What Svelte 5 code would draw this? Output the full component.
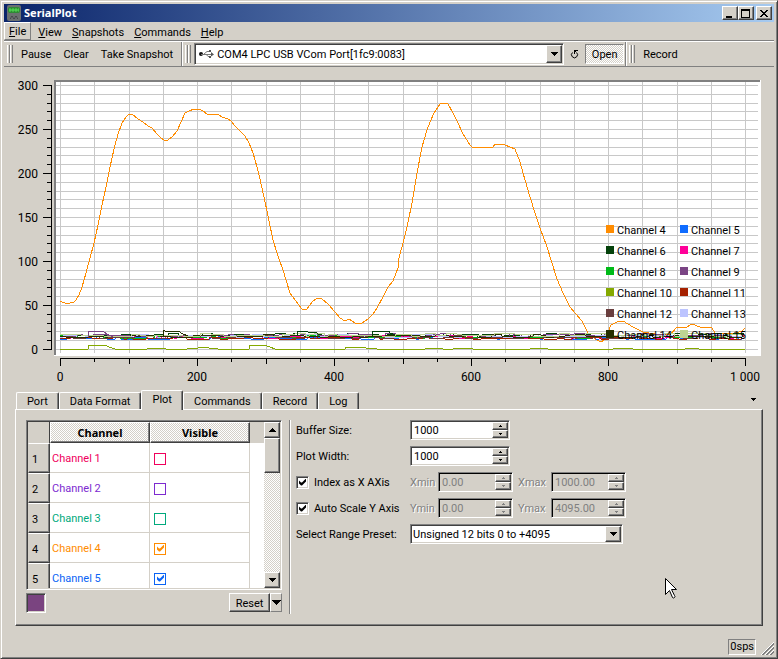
<script>
	const menus = ['File', 'View', 'Snapshots', 'Commands', 'Help'];
	const tabs = ['Port', 'Data Format', 'Plot', 'Commands', 'Record', 'Log'];

	let activeTab = $state('Plot');
	let port = $state('COM4 LPC USB VCom Port[1fc9:0083]');
	let preset = $state('Unsigned 12 bits 0 to +4095');

	let channels = $state([
		{ name: 'Channel 1', color: '#f0005c', visible: false },
		{ name: 'Channel 2', color: '#7d2ad0', visible: false },
		{ name: 'Channel 3', color: '#00a97c', visible: false },
		{ name: 'Channel 4', color: '#ff8c00', visible: true },
		{ name: 'Channel 5', color: '#0a64f5', visible: true }
	]);

	const legend = [
		{ name: 'Channel 4', color: '#ff8c00' },
		{ name: 'Channel 5', color: '#0f6cff' },
		{ name: 'Channel 6', color: '#04420b' },
		{ name: 'Channel 7', color: '#ff0099' },
		{ name: 'Channel 8', color: '#00ba18' },
		{ name: 'Channel 9', color: '#7a4484' },
		{ name: 'Channel 10', color: '#85a900' },
		{ name: 'Channel 11', color: '#a52100' },
		{ name: 'Channel 12', color: '#6a3e3e' },
		{ name: 'Channel 13', color: '#bcc4ff' },
		{ name: 'Channel 14', color: '#263000' },
		{ name: 'Channel 15', color: '#bdd393' }
	];

	// plot geometry
	const yTicks = Array.from({ length: 31 }, (_, i) => ({ value: i * 10, y: Math.round(349 - i * 8.8) }));
	const xTicks = Array.from({ length: 21 }, (_, i) => ({ value: i * 50, x: Math.round(60 + i * 34.25) }));

	function tickLength(value) {
		if (value % 200 === 0) return 8;
		return value % 100 === 0 ? 6 : 4;
	}

	const mainCurve =
		'60,301 62,302 65,303 70,303 74,302 76,300 79,295 82,287 86,273 90,258 94,243 98,225 102,205 106,187 110,167 ' +
		'114,149 118,134 122,123 126,117 129,114 132,114 138,119 143,122 148,126 152,128 157,134 161,138 164,140 168,140 ' +
		'172,137 177,131 181,122 185,113 189,111 194,109 199,109 203,111 207,114 218,114 222,117 228,119 231,121 235,126 ' +
		'241,132 245,136 249,143 253,153 257,167 260,179 264,197 268,216 273,240 278,256 283,270 290,293 295,300 302,309 ' +
		'307,309 312,302 317,298 322,299 328,304 335,312 340,318 345,321 349,319 355,323 362,323 368,319 373,314 377,308 ' +
		'383,297 388,287 393,281 398,268 399,258 403,243 407,227 412,203 417,173 422,147 427,130 430,122 434,113 440,104 ' +
		'444,103 448,104 453,113 458,123 463,134 470,145 473,148 493,147 495,144 505,145 510,147 515,149 520,162 525,180 ' +
		'530,197 535,213 540,228 547,247 552,263 557,279 563,293 570,307 575,313 582,321 585,327 588,333 595,339 601,342 ' +
		'604,340 608,332 611,325 617,322 623,321 628,324 633,327 643,332 655,334 670,335 677,327 687,327 692,324 700,327 ' +
		'712,328 715,333 733,334 742,331 745,328';

	const lowCurve =
		'60,349 88,349 89,345 105,345 109,347 115,349 147,349 148,348 165,348 166,349 187,349 188,348 198,348 199,347 ' +
		'207,347 209,348 218,349 249,349 250,345 264,345 270,347 275,349 345,349 346,347 365,347 366,348 377,349 425,349 ' +
		'426,348 442,348 443,349 453,349 454,348 472,348 473,349 530,349 531,348 547,348 548,349 613,349 614,348 632,348 ' +
		'633,349 685,349 686,348 698,348 699,349 745,349';

	const purpleBump = '88,337 89,331 103,331 107,334 113,337';
	const oliveBump = '163,337 163,330 165,331 178,331 183,334 188,336';
	const greenBump = '297,336 297,331 307,331 308,332 315,332 320,335';
	const greenBump2 = '372,336 372,331 389,331 390,333 395,335';

	// the idle channels sit close to zero with small steps
	const idleBase = [338, 335, 337, 337, 335, 338, 337, 336, 336, 335];

	function idleCurve(seed, base) {
		let state = seed * 7919 + 17;
		let points = '';
		for (let x = 60; x < 745; ) {
			state = (state * 1103515245 + 12345) % 2147483648;
			const level = Math.floor((state / 2147483648) * 10);
			const y = base + (level > 8 ? -2 : level > 5 ? -1 : level > 2 ? 0 : 1);
			const next = Math.min(745, x + 4 + ((level * 5) % 13));
			points += `${x},${y} ${next - 1},${y} `;
			x = next;
		}
		return points;
	}

	const idle = legend
		.filter((c) => c.name !== 'Channel 4' && c.name !== 'Channel 10')
		.map((c, i) => ({ color: c.color, points: idleCurve(i + 1, idleBase[i]) }));
</script>

{#snippet arrow(dir)}
	<svg class="arrow" width="7" height="4" viewBox="0 0 7 4" aria-hidden="true">
		<path d={dir === 'up' ? 'M3 0h1v1h1v1h1v1h1v1H0V3h1V2h1V1h1z' : 'M0 0h7v1H6v1H5v1H4v1H3V3H2V2H1V1H0z'} />
	</svg>
{/snippet}

{#snippet spin(id, value, disabled)}
	<div class="spin" class:disabled>
		<input {id} type="text" inputmode="decimal" {value} {disabled} />
		<div class="spin-buttons">
			<button aria-label="Increase" {disabled}>
				<svg class="arrow" width="3" height="2" viewBox="0 0 3 2"><path d="M1 0h1v1h1v1H0V1h1z" /></svg>
			</button>
			<button aria-label="Decrease" {disabled}>
				<svg class="arrow" width="3" height="2" viewBox="0 0 3 2"><path d="M0 0h3v1H2v1H1V1H0z" /></svg>
			</button>
		</div>
	</div>
{/snippet}

<div class="window">
	<header class="titlebar">
		<svg width="16" height="16" viewBox="0 0 16 16" aria-hidden="true">
			<rect x="1" y="0" width="14" height="16" rx="2" fill="#6b7070" />
			<rect x="2" y="2" width="12" height="6" rx="2" fill="#2f8a35" />
			<path d="M3 4h10M3 6h10" stroke="#4fd84e" stroke-dasharray="2 1" fill="none" />
			<path d="M3 5h10" stroke="#58e858" fill="none" />
			<path d="M4 11h8v3H4z" fill="#46494b" />
			<path d="M4 11l2 3 2-3 2 3 2-3" stroke="#707577" fill="none" />
		</svg>
		<h1>SerialPlot</h1>
		<div class="window-buttons">
			<button class="raised" aria-label="Minimize">
				<svg width="10" height="9" viewBox="0 0 10 9"><path d="M1 7h6v2H1z" /></svg>
			</button>
			<button class="raised" aria-label="Maximize">
				<svg width="10" height="9" viewBox="0 0 10 9"><path fill-rule="evenodd" d="M0 0h9v9H0zM1 2v6h7V2z" /></svg>
			</button>
			<button class="raised close" aria-label="Close">
				<svg width="10" height="9" viewBox="0 0 10 9">
					<path d="M1 1h2v1h1v1h2V2h1V1h2v1H8v1H7v1H6v1h1v1h1v1h1v1H7V7H6V6H4v1H3v1H1V7h1V6h1V5h1V4H3V3H2V2H1z" />
				</svg>
			</button>
		</div>
	</header>

	<nav class="menubar">
		{#each menus as menu, i}
			<button class="menu" class:hot={i === 0}><u>{menu[0]}</u>{menu.slice(1)}</button>
		{/each}
	</nav>

	<div class="toolbars">
		<div class="toolbar main-tools">
			<span class="handle"></span>
			<button class="tool">Pause</button>
			<button class="tool">Clear</button>
			<button class="tool">Take Snapshot</button>
		</div>
		<div class="toolbar port-tools">
			<span class="handle"></span>
			<div class="combo port">
				<svg class="usb" width="15" height="8" viewBox="0 0 15 8" aria-hidden="true">
					<circle cx="2" cy="4" r="2" fill="#111" />
					<path d="M2 4.500h11M5 4l3-2.500h3M7 4l2 2.500h3" fill="none" stroke="#777" />
					<path d="M12 2l3 2.500-3 2zM10 0h2v2h-2zM10 6h2v2h-2z" fill="#555" />
				</svg>
				<select bind:value={port} aria-label="Port">
					<option>COM4 LPC USB VCom Port[1fc9:0083]</option>
				</select>
				<span class="drop raised">{@render arrow('down')}</span>
			</div>
			<button class="reload" aria-label="Reload ports">
				<svg width="9" height="9" viewBox="0 0 9 9">
					<path d="M2.500 2.500a3 3 0 1 0 4 0" fill="none" stroke="#000" />
					<path d="M4 0h4v1H6v1H5v2H4z" />
				</svg>
			</button>
			<button class="open">Open</button>
		</div>
		<div class="toolbar">
			<span class="handle"></span>
			<button class="tool">Record</button>
		</div>
	</div>

	<svg class="plot" viewBox="4 67 770 323" role="img" aria-label="Channel plot">
		<rect x="54" y="80" width="707" height="276" fill="#fff" />
		<path d="M54 80h706v2H56v273h-2z" fill="#808080" />

		<g fill="#c8c8c8">
			{#each xTicks as t}
				<rect x={t.x} y="82" width="1" height="271" />
			{/each}
			{#each yTicks as t}
				<rect x="56" y={t.y} width="702" height="1" />
			{/each}
		</g>

		<rect x="51" y="85" width="1" height="265" />
		{#each yTicks as t}
			{#if t.value % 50 === 0}
				<rect x="43" y={t.y} width="8" height="1" />
				<text x="38" y={t.y + 5} text-anchor="end">{t.value}</text>
			{:else}
				<rect x="47" y={t.y} width="4" height="1" />
			{/if}
		{/each}

		<rect x="60" y="358" width="686" height="1" />
		{#each xTicks as t}
			<rect x={t.x} y="358" width="1" height={tickLength(t.value)} />
			{#if t.value % 200 === 0}
				<text x={t.x} y="381" text-anchor="middle">{t.value === 1000 ? '1 000' : t.value}</text>
			{/if}
		{/each}

		<g class="curves">
			<polyline points={mainCurve} stroke="#ff8c00" />
			{#each idle as c}
				<polyline points={c.points} stroke={c.color} />
			{/each}
			<polyline points={purpleBump} stroke="#7a4484" />
			<polyline points={oliveBump} stroke="#263000" />
			<polyline points={greenBump} stroke="#04420b" />
			<polyline points={greenBump2} stroke="#04420b" />
			<polyline points={lowCurve} stroke="#85a900" />
		</g>

		{#each legend as item, i}
			{@const x = 606 + (i % 2) * 74}
			{@const y = 225 + Math.floor(i / 2) * 21}
			<rect {x} {y} width="8" height="8" fill={item.color} />
			<text class="legend-text" x={x + 11} y={y + 9}>{item.name}</text>
		{/each}
	</svg>

	<div class="tabs" role="tablist">
		{#each tabs as tab}
			<button class="tab" class:active={tab === activeTab} role="tab" aria-selected={tab === activeTab} onclick={() => (activeTab = tab)}>
				{tab}
			</button>
		{/each}
		<button class="hide-panel" aria-label="Hide panel">
			<svg class="arrow" width="5" height="3" viewBox="0 0 5 3"><path d="M0 0h5v1H4v1H3v1H2V2H1V1H0z" /></svg>
		</button>
	</div>

	<main class="panel">
		<section class="channel-side">
			<div class="table-frame">
				<div class="table-view">
					<table>
						<thead>
							<tr>
								<td class="corner"></td>
								<th scope="col">Channel</th>
								<th scope="col">Visible</th>
							</tr>
						</thead>
						<tbody>
							{#each channels as channel, i}
								<tr style="color: {channel.color}">
									<th scope="row">{i + 1}</th>
									<td>{channel.name}</td>
									<td><input type="checkbox" aria-label="{channel.name} visible" bind:checked={channel.visible} /></td>
								</tr>
							{/each}
						</tbody>
					</table>
				</div>
				<div class="scrollbar">
					<button class="raised" aria-label="Scroll up">{@render arrow('up')}</button>
					<div class="thumb raised"></div>
					<button class="raised last" aria-label="Scroll down">{@render arrow('down')}</button>
				</div>
			</div>
			<div class="table-actions">
				<button class="swatch" aria-label="Channel color"></button>
				<button class="raised reset">Reset</button>
				<button class="reset-menu" aria-label="Reset options">
					<svg class="arrow" width="9" height="5" viewBox="0 0 9 5"><path d="M0 0h9v1H8v1H7v1H6v1H5v1H4V4H3V3H2V2H1V1H0z" /></svg>
				</button>
			</div>
		</section>

		<section class="settings">
			<div class="row">
				<label class="name" for="buffer">Buffer Size:</label>
				<div class="wide">{@render spin('buffer', '1000', false)}</div>
			</div>
			<div class="row">
				<label class="name" for="width">Plot Width:</label>
				<div class="wide">{@render spin('width', '1000', false)}</div>
			</div>
			<div class="row">
				<label class="name check"><input type="checkbox" checked /><span>Index as X AXis</span></label>
				<label class="off" for="xmin">Xmin</label>
				{@render spin('xmin', '0.00', true)}
				<label class="off max" for="xmax">Xmax</label>
				{@render spin('xmax', '1000.00', true)}
			</div>
			<div class="row">
				<label class="name check"><input type="checkbox" checked /><span>Auto Scale Y Axis</span></label>
				<label class="off" for="ymin">Ymin</label>
				{@render spin('ymin', '0.00', true)}
				<label class="off max" for="ymax">Ymax</label>
				{@render spin('ymax', '4095.00', true)}
			</div>
			<div class="row">
				<label class="name" for="preset">Select Range Preset:</label>
				<div class="combo preset">
					<select id="preset" bind:value={preset}>
						<option>Unsigned 12 bits 0 to +4095</option>
					</select>
					<span class="drop raised">{@render arrow('down')}</span>
				</div>
			</div>
		</section>
	</main>

	<footer class="statusbar">
		<span class="rate">0sps</span>
		<svg class="grip" width="13" height="13" viewBox="0 0 13 13" aria-hidden="true">
			<path d="M0 13L13 0M4 13l9-9M8 13l5-5" stroke="#fff" />
			<path d="M1 13L13 1M2 13L13 2M5 13l8-8M6 13l7-7M9 13l4-4M10 13l3-3" stroke="#808080" />
		</svg>
	</footer>

	<svg class="cursor" width="12" height="21" viewBox="0 0 12 21" aria-hidden="true">
		<path d="M.5 .5v16l4-4 3 7q1 1 2 0 1-1 0-2l-3-6h5z" fill="#fff" stroke="#000" />
	</svg>
</div>

<style>
	:global(body) {
		background: #d4d0c8;
	}

	.window {
		position: relative;
		display: flex;
		flex-direction: column;
		min-height: 100vh;
		box-sizing: border-box;
		padding: 3px;
		background: #d4d0c8;
		border: 1px solid;
		border-color: #d4d0c8 #404040 #404040 #d4d0c8;
		box-shadow: inset 1px 1px #fff, inset -1px -1px #808080;
		font-family: Roboto, "Liberation Sans", sans-serif;
		font-size: 11px;
		line-height: 14px;
		color: #000;
	}

	button,
	input,
	select {
		box-sizing: border-box;
		margin: 0;
		padding: 0;
		border: 0;
		border-radius: 0;
		background: none;
		font: inherit;
		color: inherit;
		appearance: none;
	}

	svg {
		display: block;
		flex-shrink: 0;
	}

	.arrow,
	.window-buttons svg {
		shape-rendering: crispEdges;
		fill: currentColor;
	}

	.raised {
		display: flex;
		align-items: center;
		justify-content: center;
		box-sizing: border-box;
		background: #d4d0c8;
		border: 1px solid;
		border-color: #fff #404040 #404040 #fff;
		box-shadow: inset -1px -1px #808080;
	}

	/* title bar */
	.titlebar {
		display: flex;
		align-items: center;
		height: 18px;
		padding: 0 2px;
		background: linear-gradient(90deg, #0a246a, #a6caf0);
	}

	.titlebar h1 {
		margin: 0 0 0 2px;
		flex: 1;
		color: #fff;
		font-family: "Noto Sans", sans-serif;
		font-size: 11px;
		font-weight: 700;
	}

	.window-buttons {
		display: flex;
	}

	.window-buttons button {
		width: 16px;
		height: 14px;
	}

	.window-buttons .close {
		margin-left: 2px;
	}

	/* menu and tool bars */
	.menubar {
		display: flex;
		height: 18px;
		border-bottom: 1px solid #808080;
	}

	.menu {
		padding: 3px 5px 0;
	}

	.menu u {
		text-underline-offset: 1px;
	}

	.menu.hot {
		margin-right: 2px;
		padding: 2px 4px 0;
		border: 1px solid;
		border-color: #fff #808080 #808080 #fff;
	}

	.toolbars {
		display: flex;
		height: 24px;
		border-top: 1px solid #fff;
		border-bottom: 1px solid #808080;
	}

	.toolbar {
		display: flex;
		align-items: center;
		box-sizing: border-box;
		padding-left: 2px;
		border-left: 1px solid #fff;
	}

	.main-tools,
	.port-tools {
		border-right: 1px solid #808080;
	}

	.main-tools {
		border-left: 0;
		padding: 0 1px 0 3px;
	}

	.port-tools {
		flex: 0 1 444px;
		min-width: 0;
	}

	.handle {
		width: 6px;
		height: 18px;
		margin-right: 3px;
		box-sizing: border-box;
		background: linear-gradient(90deg, #fff 1px, #d4d0c8 1px 2px, #808080 2px 3px, #fff 3px 4px, #d4d0c8 4px 5px, #808080 5px);
	}

	.tool {
		padding: 2px 5px 0;
		height: 20px;
		margin-right: 2px;
		white-space: nowrap;
	}

	.combo,
	.spin {
		position: relative;
		display: flex;
		box-sizing: border-box;
		height: 20px;
		background: #fff;
		border: 1px solid;
		border-color: #808080 #fff #fff #808080;
		box-shadow: inset 1px 1px #404040, inset -1px -1px #d4d0c8;
	}

	.combo select {
		flex: 1;
		min-width: 0;
		padding: 2px 18px 0 2px;
	}

	.port {
		flex: 1;
		height: 22px;
	}

	.combo.port select {
		padding-left: 22px;
	}

	.usb {
		position: absolute;
		left: 4px;
		top: 6px;
	}

	.drop {
		position: absolute;
		top: 1px;
		right: 1px;
		bottom: 1px;
		width: 16px;
		pointer-events: none;
	}

	.reload {
		padding: 6px;
	}

	.open {
		width: 39px;
		height: 20px;
		padding: 2px 0 0;
		margin: 0 1px 0 0;
		background: conic-gradient(#fff 25%, #d4d0c8 0 50%, #fff 0 75%, #d4d0c8 0) 0 0 / 2px 2px;
		border: 1px solid;
		border-color: #808080 #fff #fff #808080;
	}

	/* plot */
	.plot {
		width: 100%;
		height: auto;
		shape-rendering: crispEdges;
	}

	.plot text {
		font-size: 12px;
	}

	.plot .legend-text {
		font-size: 11px;
	}

	.curves {
		fill: none;
		stroke-width: 1;
	}

	/* tabs */
	.tabs {
		display: flex;
		align-items: flex-end;
		height: 19px;
		padding: 0 13px 0 12px;
	}

	.tab {
		height: 17px;
		padding: 2px 10px 0;
		border: solid;
		border-width: 1px 1px 0;
		border-color: #fff #404040 #fff #fff;
		border-radius: 2px 2px 0 0;
		box-shadow: inset -1px 0 #808080;
		white-space: nowrap;
	}

	.tab.active {
		position: relative;
		height: 20px;
		margin-bottom: -1px;
		padding-top: 0;
		padding-bottom: 1px;
		background: #d4d0c8;
	}

	.hide-panel {
		margin-left: auto;
		padding: 8px 5px;
	}

	.panel {
		display: flex;
		gap: 7px;
		margin: 0 11px;
		padding: 10px 10px 11px;
		border: 1px solid;
		border-color: #fff #404040 #404040 #fff;
		box-shadow: inset -1px -1px #808080;
	}

	.channel-side {
		width: 256px;
	}

	.table-frame {
		display: flex;
		box-sizing: border-box;
		height: 170px;
		padding: 1px;
		border: 1px solid;
		border-color: #808080 #fff #fff #808080;
		box-shadow: inset 1px 1px #404040, inset -1px -1px #d4d0c8;
	}

	.table-view {
		flex: 1;
		overflow: hidden;
		background: linear-gradient(#d4d0c8 21px, #fff 21px);
	}

	table {
		border-collapse: separate;
		border-spacing: 0;
		table-layout: fixed;
		width: 222px;
	}

	td,
	th {
		box-sizing: border-box;
		padding: 0 2px;
		text-align: left;
	}

	tbody td {
		height: 30px;
		padding-top: 2px;
		border-right: 1px solid #d4d0c8;
		border-bottom: 1px solid #d4d0c8;
	}

	tbody td input {
		display: block;
		margin-left: 2px;
	}

	thead th {
		height: 21px;
		background: conic-gradient(#fff 25%, #d4d0c8 0 50%, #fff 0 75%, #d4d0c8 0) 0 0 / 2px 2px;
		border: 1px solid;
		border-color: #fff #404040 #404040 #fff;
		box-shadow: inset -1px -1px #808080;
		font-family: "Noto Sans", sans-serif;
		text-align: center;
	}

	.corner {
		width: 22px;
		border-right: 1px solid #404040;
	}

	tbody th {
		padding: 3px 3px 0;
		background: #d4d0c8;
		border: 1px solid;
		border-color: #fff #404040 #404040 #d4d0c8;
		box-shadow: inset -1px -1px #808080;
		color: #000;
		font-weight: 400;
	}

	input[type="checkbox"] {
		width: 12px;
		height: 12px;
		border: 1px solid currentColor;
	}

	input[type="checkbox"]:checked::before {
		content: "";
		display: block;
		width: 7px;
		height: 7px;
		margin: 1px 2px;
		background: currentColor;
		clip-path: polygon(0 2px, 2px 4px, 3px 4px, 7px 0, 7px 3px, 3px 7px, 2px 7px, 0 5px);
	}

	.scrollbar {
		display: flex;
		flex-direction: column;
		width: 16px;
		background: conic-gradient(#fff 25%, #d4d0c8 0 50%, #fff 0 75%, #d4d0c8 0) 0 0 / 2px 2px;
	}

	.scrollbar button {
		height: 16px;
	}

	.scrollbar .last {
		margin-top: auto;
	}

	.thumb {
		height: 35px;
	}

	.table-actions {
		display: flex;
		height: 20px;
		margin-top: 3px;
	}

	.swatch {
		width: 20px;
		background: #7a4480;
		border: 1px solid;
		border-color: #808080 #fff #fff #808080;
		box-shadow: inset 1px 1px #404040, inset -1px -1px #d4d0c8;
	}

	.reset {
		width: 41px;
		height: 19px;
		margin-left: auto;
		padding-top: 2px;
	}

	.reset-menu {
		display: flex;
		align-items: center;
		justify-content: center;
		width: 12px;
		height: 19px;
		border: 1px solid;
		border-color: #fff #808080 #808080 #fff;
	}

	/* settings form */
	.settings {
		display: flex;
		flex-direction: column;
		gap: 6px;
		padding: 0 0 70px 6px;
		border-left: 1px solid #808080;
		box-shadow: inset 1px 0 #fff;
	}

	.row {
		display: flex;
		align-items: center;
		height: 20px;
	}

	.name {
		width: 114px;
		padding-top: 2px;
		white-space: nowrap;
	}

	.check {
		display: flex;
		align-items: center;
		gap: 5px;
		padding-top: 0;
	}

	.check span {
		padding-top: 2px;
	}

	.check input[type="checkbox"] {
		width: 13px;
		height: 13px;
		background: #fff;
		border: 1px solid;
		border-color: #808080 #fff #fff #808080;
		box-shadow: inset 1px 1px #404040, inset -1px -1px #d4d0c8;
	}

	.check input[type="checkbox"]:checked::before {
		margin: 2px;
		background: #000;
	}

	.off {
		width: 28px;
		padding-top: 2px;
		color: #808080;
		text-shadow: 1px 1px #fff;
	}

	.off.max {
		width: 33px;
		margin-left: 5px;
	}

	.spin {
		width: 75px;
		padding: 1px;
	}

	.wide .spin {
		width: 100px;
	}

	.spin input {
		flex: 1;
		min-width: 0;
		padding: 2px 0 0 2px;
	}

	.spin-buttons {
		display: flex;
		flex-direction: column;
		width: 16px;
	}

	.spin-buttons button {
		display: flex;
		flex: 1;
		align-items: center;
		justify-content: center;
		background: #d4d0c8;
		border: 1px solid;
		border-color: #fff #404040 #404040 #fff;
		box-shadow: inset -1px -1px #808080;
	}

	.spin.disabled {
		background: #d4d0c8;
		box-shadow: inset 1px 1px #000, inset -1px -1px #d4d0c8;
		color: #808080;
	}

	.preset {
		width: 213px;
	}

	/* status bar */
	.statusbar {
		display: flex;
		align-items: flex-end;
		justify-content: flex-end;
		gap: 5px;
		margin-top: auto;
		padding-top: 12px;
	}

	.rate {
		padding: 0 1px;
		border: 1px solid;
		border-color: #808080 #fff #fff #808080;
	}

	.cursor {
		position: absolute;
		right: 100px;
		bottom: 59px;
		pointer-events: none;
	}
</style>
